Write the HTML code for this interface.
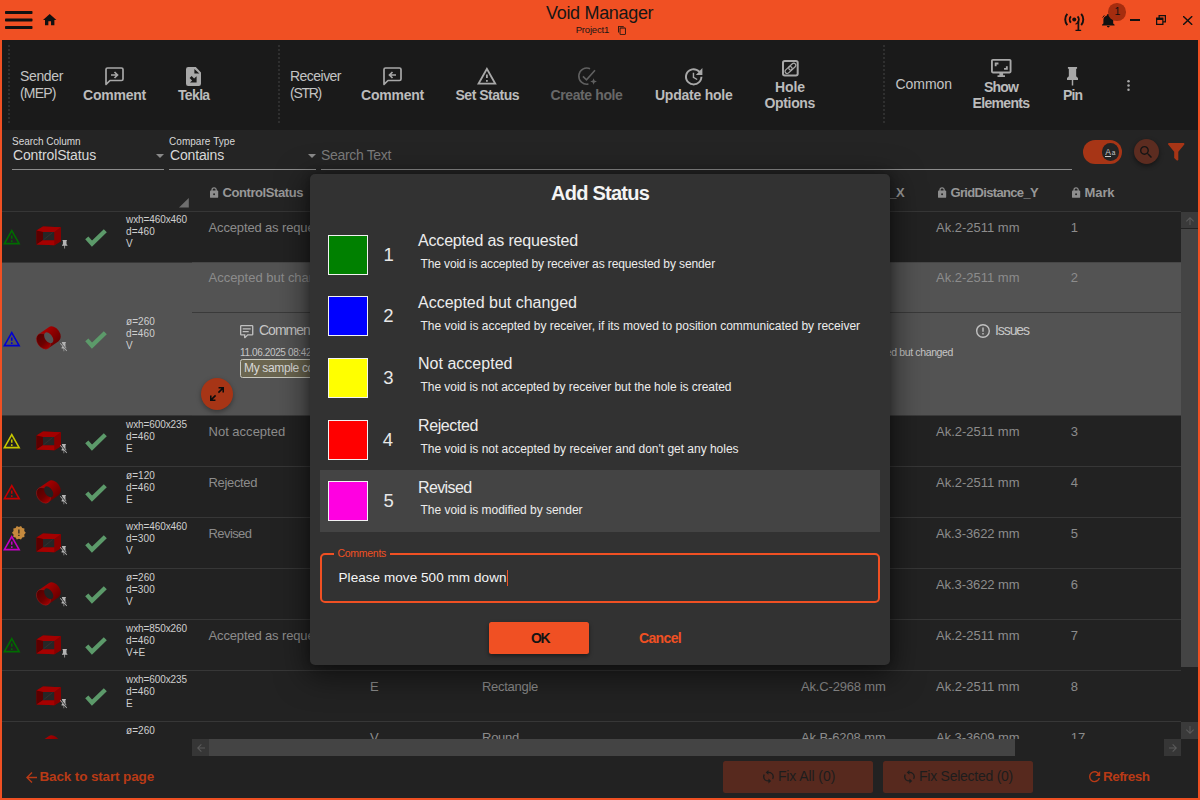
<!DOCTYPE html>
<html lang="en">
<head>
<meta charset="utf-8">
<title>Void Manager</title>
<style>
*{box-sizing:border-box;margin:0;padding:0}
html,body{width:1200px;height:800px;overflow:hidden;background:#f05023;font-family:"Liberation Sans",sans-serif}
#win{position:absolute;left:0;top:0;width:1200px;height:800px;background:#f05023;overflow:hidden}
.t{position:absolute;white-space:nowrap;line-height:1}
.ic{position:absolute;overflow:visible}
.r{position:absolute}
.vsep{position:absolute;top:45px;width:2px;height:80px;background-image:linear-gradient(#2f2f2f 50%,transparent 50%);background-size:2px 4px}
</style>
</head>
<body>
<div id="win">
<!-- title bar -->
<svg class="ic" style="left:5px;top:11px;" width="27.5" height="18" viewBox="0 0 27.5 18"><rect x="0" y="0" width="27.5" height="3" rx="0.8" fill="#111"/><rect x="0" y="7.6" width="27.5" height="3" rx="0.8" fill="#111"/><rect x="0" y="15" width="27.5" height="3" rx="0.8" fill="#111"/></svg>
<svg class="ic" style="left:43.2px;top:14px;" width="13.4" height="11.2" viewBox="2 3 20 17" preserveAspectRatio="none"><path d="M10,20V14H14V20H19V12H22L12,3L2,12H5V20H10Z" fill="#111" fill-rule="evenodd"/></svg>
<div class="t" style="left:546.00px;top:4px;font-size:18px;color:#161616;letter-spacing:-0.315px;">Void Manager</div>
<div class="t" style="left:575.70px;top:25px;font-size:9.5px;color:#161616;letter-spacing:-0.194px;">Project1</div>
<svg class="ic" style="left:618px;top:25.8px;" width="7.8" height="8.8" viewBox="2 1 19 22" preserveAspectRatio="none"><path d="M19,21H8V7H19M19,5H8A2,2 0 0,0 6,7V21A2,2 0 0,0 8,23H19A2,2 0 0,0 21,21V7A2,2 0 0,0 19,5M16,1H4A2,2 0 0,0 2,3V17H4V3H16V1Z" fill="#111" fill-rule="evenodd"/></svg>
<svg class="ic" style="left:1063.5px;top:13px;" width="20.5" height="18" viewBox="0 0 20.5 18"><g fill="none" stroke="#111" stroke-width="1.9"><path d="M3.3 0.9 A8.6 8.6 0 0 0 3.3 12.1"/><path d="M17.2 0.9 A8.6 8.6 0 0 1 17.2 12.1"/><path d="M6.9 3.4 A4.6 4.6 0 0 0 6.9 9.6"/><path d="M13.6 3.4 A4.6 4.6 0 0 1 13.6 9.6"/></g><circle cx="10.25" cy="6.5" r="2" fill="#111"/></svg>
<div class="t" style="left:1074.60px;top:21px;font-size:12px;color:#111;font-weight:bold;">1</div>
<svg class="ic" style="left:1102.3px;top:14.3px;" width="12.6" height="13.4" viewBox="3 2 18 21" preserveAspectRatio="none"><path d="M21,19V20H3V19L5,17V11C5,7.9 7.03,5.17 10,4.29C10,4.19 10,4.1 10,4A2,2 0 0,1 12,2A2,2 0 0,1 14,4C14,4.1 14,4.19 14,4.29C16.97,5.17 19,7.9 19,11V17L21,19M14,21A2,2 0 0,1 12,23A2,2 0 0,1 10,21" fill="#111" fill-rule="evenodd"/></svg>
<svg class="ic" style="left:1101.5px;top:14.5px;" width="3" height="3" viewBox="0 0 3 3"><path d="M2.4 0.3 L0.6 2.6" stroke="#111" stroke-width="0.9"/></svg>
<div class="r" style="left:1108.2px;top:3.2px;width:17.6px;height:17.6px;border-radius:50%;background:#a52d0f"></div>
<div class="t" style="left:1114.60px;top:6px;font-size:10.5px;color:#111;">1</div>
<div class="r" style="left:1130px;top:18.8px;width:10px;height:2.4px;background:#111;"></div>
<svg class="ic" style="left:1156px;top:15px;" width="10" height="10" viewBox="4 4 16 16" preserveAspectRatio="none"><path d="M4,8H8V4H20V16H16V20H4V8M16,8V14H18V6H10V8H16M6,12V18H14V12H6Z" fill="#111" fill-rule="evenodd"/></svg>
<svg class="ic" style="left:1182.6px;top:15.6px;" width="9.4" height="9" viewBox="5 5 14 14" preserveAspectRatio="none"><path d="M13.46,12L19,17.54V19H17.54L12,13.46L6.46,19H5V17.54L10.54,12L5,6.46V5H6.46L12,10.54L17.54,5H19V6.46L13.46,12Z" fill="#111" fill-rule="evenodd"/></svg>
<!-- toolbar -->
<div class="r" style="left:2px;top:40px;width:1196px;height:89.5px;background:#1a1a1a;"></div>
<div class="vsep" style="left:8px"></div>
<div class="vsep" style="left:278px"></div>
<div class="vsep" style="left:883px"></div>
<div class="t" style="left:20.00px;top:69px;font-size:14px;color:#c4c4c4;letter-spacing:-0.357px;">Sender</div>
<div class="t" style="left:20.00px;top:86px;font-size:14px;color:#c4c4c4;letter-spacing:-0.833px;">(MEP)</div>
<svg class="ic" style="left:105px;top:67px;" width="19" height="18.5" viewBox="0 0 19 18.5"><path d="M2.5 1 H16.5 A1.5 1.5 0 0 1 18 2.5 V12 A1.5 1.5 0 0 1 16.5 13.5 H5 L1 17.3 V2.5 A1.5 1.5 0 0 1 2.5 1 Z" fill="none" stroke="#a8a8a8" stroke-width="1.7" stroke-linejoin="round"/><path d="M6 8 H12 M9.5 5 L12.5 8 L9.5 11" fill="none" stroke="#a8a8a8" stroke-width="1.7"/></svg>
<div class="t" style="left:83.00px;top:88px;font-size:14px;color:#bcbcbc;font-weight:bold;letter-spacing:-0.223px;">Comment</div>
<svg class="ic" style="left:186.1px;top:67px;" width="15" height="19" viewBox="0 0 15 19"><path d="M2.2 0 H9.8 L15 5.4 V16.8 A2.2 2.2 0 0 1 12.8 19 H2.2 A2.2 2.2 0 0 1 0 16.8 V2.2 A2.2 2.2 0 0 1 2.2 0 Z" fill="#a8a8a8"/><path d="M8.4 2 V6.6 H13.3 Z" fill="#1a1a1a"/><path d="M10.6 9.2 V15.6 H4 L6.1 13.5 L3.6 11 L5.6 9 L8.1 11.5 Z" fill="#1a1a1a"/></svg>
<div class="t" style="left:178.00px;top:88px;font-size:14px;color:#bcbcbc;font-weight:bold;letter-spacing:-0.652px;">Tekla</div>
<div class="t" style="left:290.00px;top:69px;font-size:14px;color:#c4c4c4;letter-spacing:-0.530px;">Receiver</div>
<div class="t" style="left:290.00px;top:86px;font-size:14px;color:#c4c4c4;letter-spacing:-1.265px;">(STR)</div>
<svg class="ic" style="left:383px;top:67px;" width="19" height="18.5" viewBox="0 0 19 18.5"><path d="M2.5 1 H16.5 A1.5 1.5 0 0 1 18 2.5 V12 A1.5 1.5 0 0 1 16.5 13.5 H5 L1 17.3 V2.5 A1.5 1.5 0 0 1 2.5 1 Z" fill="none" stroke="#a8a8a8" stroke-width="1.7" stroke-linejoin="round"/><path d="M13 8 H7 M9.5 5 L6.5 8 L9.5 11" fill="none" stroke="#a8a8a8" stroke-width="1.7"/></svg>
<div class="t" style="left:361.00px;top:88px;font-size:14px;color:#bcbcbc;font-weight:bold;letter-spacing:-0.223px;">Comment</div>
<svg class="ic" style="left:477.4px;top:67.2px;" width="19.8" height="17.6" viewBox="1 2 22 19" preserveAspectRatio="none"><path d="M12,2L1,21H23M12,6L19.53,19H4.47M11,10V14H13V10M11,16V18H13V16" fill="#a8a8a8" fill-rule="evenodd"/></svg>
<div class="t" style="left:455.50px;top:88px;font-size:14px;color:#bcbcbc;font-weight:bold;letter-spacing:-0.496px;">Set Status</div>
<svg class="ic" style="left:577.5px;top:67.3px;" width="19" height="18.5" viewBox="0 0 19 18.5"><path d="M12.06 1.64 A8.1 8.1 0 1 0 10.45 17.05" fill="none" stroke="#606060" stroke-width="1.6"/><path d="M4.9 9.4 L8.5 12.9 L17 3.3" fill="none" stroke="#606060" stroke-width="1.6"/><path d="M15.6 11.2 L16.5 13.6 L18.9 14.5 L16.5 15.4 L15.6 17.8 L14.7 15.4 L12.3 14.5 L14.7 13.6 Z" fill="#606060"/></svg>
<div class="t" style="left:550.50px;top:88px;font-size:14px;color:#686868;font-weight:bold;letter-spacing:-0.386px;">Create hole</div>
<svg class="ic" style="left:685.3px;top:67.8px;" width="17.4" height="17.4" viewBox="3 3 18 18" preserveAspectRatio="none"><path d="M21,10.12H14.22L16.96,7.3C14.23,4.6 9.81,4.5 7.08,7.2C4.35,9.91 4.35,14.28 7.08,17C9.81,19.7 14.23,19.7 16.96,17C18.32,15.65 19,14.08 19,12.1H21C21,14.08 20.12,16.65 18.36,18.39C14.85,21.87 9.15,21.87 5.64,18.39C2.14,14.92 2.11,9.28 5.62,5.81C9.13,2.34 14.76,2.34 18.27,5.81L21,3V10.12M12.5,8V12.25L16,14.33L15.28,15.54L11,13V8H12.5Z" fill="#a8a8a8" fill-rule="evenodd"/></svg>
<div class="t" style="left:655.00px;top:88px;font-size:14px;color:#bcbcbc;font-weight:bold;letter-spacing:-0.238px;">Update hole</div>
<svg class="ic" style="left:781.5px;top:59.7px;" width="16.7" height="16.5" viewBox="0 0 16.7 16.5"><rect x="1" y="1" width="14.7" height="14.5" rx="1.8" fill="none" stroke="#a8a8a8" stroke-width="2"/><g transform="translate(8.45 8.3) rotate(-43)" fill="none" stroke="#a8a8a8" stroke-width="1.25"><rect x="-6.6" y="-2.1" width="8.2" height="4.2" rx="2.1"/><rect x="-1.6" y="-2.1" width="8.2" height="4.2" rx="2.1"/></g></svg>
<div class="t" style="left:775.00px;top:80px;font-size:14px;color:#bcbcbc;font-weight:bold;letter-spacing:-0.085px;">Hole</div>
<div class="t" style="left:764.50px;top:96px;font-size:14px;color:#bcbcbc;font-weight:bold;letter-spacing:-0.340px;">Options</div>
<div class="t" style="left:895.50px;top:77px;font-size:14px;color:#c4c4c4;letter-spacing:-0.049px;">Common</div>
<svg class="ic" style="left:990.5px;top:59px;" width="20.5" height="18" viewBox="1 2 22 20" preserveAspectRatio="none"><path d="M9,6H5V10H7V8H9M19,10H17V12H15V14H19M21,16H3V4H21M21,2H3C1.89,2 1,2.89 1,4V16A2,2 0 0,0 3,18H10V20H8V22H16V20H14V18H21A2,2 0 0,0 23,16V4C23,2.89 22.1,2 21,2" fill="#a8a8a8" fill-rule="evenodd"/></svg>
<div class="t" style="left:984.00px;top:80px;font-size:14px;color:#bcbcbc;font-weight:bold;letter-spacing:-0.833px;">Show</div>
<div class="t" style="left:972.50px;top:96px;font-size:14px;color:#bcbcbc;font-weight:bold;letter-spacing:-0.656px;">Elements</div>
<svg class="ic" style="left:1067px;top:67px;" width="11" height="18.5" viewBox="6 2 12 20" preserveAspectRatio="none"><path d="M16,12V4H17V2H7V4H8V12L6,14V16H11.2V22H12.8V16H18V14L16,12Z" fill="#a8a8a8" fill-rule="evenodd"/></svg>
<div class="t" style="left:1063.00px;top:88px;font-size:14px;color:#bcbcbc;font-weight:bold;letter-spacing:-0.926px;">Pin</div>
<svg class="ic" style="left:1127.3px;top:79.7px;" width="3" height="11" viewBox="0 0 3 11"><circle cx="1.5" cy="1.3" r="1.25" fill="#a8a8a8"/><circle cx="1.5" cy="5.5" r="1.25" fill="#a8a8a8"/><circle cx="1.5" cy="9.7" r="1.25" fill="#a8a8a8"/></svg>
<!-- search -->
<div class="r" style="left:2px;top:129.5px;width:1196px;height:668.5px;background:#242424;"></div>
<div class="t" style="left:12.00px;top:137px;font-size:10px;color:#d8d8d8;letter-spacing:-0.032px;">Search Column</div>
<div class="t" style="left:13.00px;top:148px;font-size:14px;color:#d8d8d8;letter-spacing:-0.140px;">ControlStatus</div>
<svg class="ic" style="left:156px;top:154px;" width="8" height="4" viewBox="0 0 8 4"><path d="M0 0 H8 L4 4 Z" fill="#8a8a8a"/></svg>
<div class="r" style="left:12px;top:168.6px;width:152px;height:1px;background:#8c8c8c;"></div>
<div class="t" style="left:169.00px;top:137px;font-size:10px;color:#d8d8d8;letter-spacing:0.050px;">Compare Type</div>
<div class="t" style="left:170.00px;top:148px;font-size:14px;color:#d8d8d8;letter-spacing:-0.157px;">Contains</div>
<svg class="ic" style="left:308px;top:154px;" width="8" height="4" viewBox="0 0 8 4"><path d="M0 0 H8 L4 4 Z" fill="#8a8a8a"/></svg>
<div class="r" style="left:169px;top:168.6px;width:147px;height:1px;background:#8c8c8c;"></div>
<div class="t" style="left:321.00px;top:148px;font-size:14px;color:#7c7c7c;letter-spacing:-0.334px;">Search Text</div>
<div class="r" style="left:321px;top:168.6px;width:751px;height:1px;background:#8c8c8c;"></div>
<div class="r" style="left:1083.2px;top:139.8px;width:39px;height:24px;border-radius:12px;background:#a73516"></div>
<div class="r" style="left:1101.5px;top:143px;width:17.5px;height:17.5px;border-radius:50%;background:#232323"></div>
<div class="t" style="left:1105.30px;top:148px;font-size:8.5px;color:#c8c8c8;">A</div>
<div class="t" style="left:1111.80px;top:150px;font-size:6.5px;color:#c8c8c8;">a</div>
<div class="r" style="left:1105.3px;top:155.6px;width:5.6px;height:1px;background:#c8c8c8;"></div>
<div class="r" style="left:1133.5px;top:138.5px;width:25px;height:25px;border-radius:50%;background:#5c2c20;box-shadow:0 2px 5px rgba(0,0,0,.45)"></div>
<svg class="ic" style="left:1140.3px;top:145.6px;" width="12" height="12" viewBox="3 3 17.5 17.5" preserveAspectRatio="none"><path d="M9.5,3A6.5,6.5 0 0,1 16,9.5C16,11.11 15.41,12.59 14.44,13.73L14.71,14H15.5L20.5,19L19,20.5L14,15.5V14.71L13.73,14.44C12.59,15.41 11.11,16 9.5,16A6.5,6.5 0 0,1 3,9.5A6.5,6.5 0 0,1 9.5,3M9.5,5C7,5 5,7 5,9.5C5,12 7,14 9.5,14C12,14 14,12 14,9.5C14,7 12,5 9.5,5Z" fill="#151515" fill-rule="evenodd"/></svg>
<svg class="ic" style="left:1168px;top:143px;" width="16.5" height="17.6" viewBox="4 3 16 18" preserveAspectRatio="none"><path d="M14,12V19.88C14.04,20.18 13.94,20.5 13.71,20.71C13.32,21.1 12.69,21.1 12.3,20.71L10.29,18.7C10.06,18.47 9.96,18.16 10,17.87V12H9.97L4.21,4.62C3.87,4.19 3.95,3.56 4.38,3.22C4.57,3.08 4.78,3 5,3V3H19V3C19.22,3 19.43,3.08 19.62,3.22C20.05,3.56 20.13,4.19 19.79,4.62L14.03,12H14Z" fill="#a73516" fill-rule="evenodd"/></svg>
<!-- grid header -->
<svg class="ic" style="left:209.8px;top:187.2px;" width="8.2" height="10.8" viewBox="0 0 8.2 10.8"><rect x="0" y="3.5" width="8.2" height="7.3" rx="0.9" fill="#8e8e8e"/><path d="M2 4 V2.9 A2.1 2.1 0 0 1 6.2 2.9 V4" fill="none" stroke="#8e8e8e" stroke-width="1.25"/><circle cx="4.1" cy="7.3" r="0.95" fill="#242424"/></svg>
<div class="t" style="left:222.50px;top:186px;font-size:13px;color:#989898;font-weight:bold;letter-spacing:-0.419px;">ControlStatus</div>
<svg class="ic" style="left:179.2px;top:198.4px;" width="9.8" height="9.4" viewBox="0 0 9.8 9.4"><path d="M9.8 0 V9.4 H0 Z" fill="#6e6e6e"/></svg>
<div class="t" style="left:815.50px;top:186px;font-size:13px;color:#989898;font-weight:bold;letter-spacing:-0.594px;">GridDistance_X</div>
<svg class="ic" style="left:937.8px;top:187.2px;" width="8.2" height="10.8" viewBox="0 0 8.2 10.8"><rect x="0" y="3.5" width="8.2" height="7.3" rx="0.9" fill="#8e8e8e"/><path d="M2 4 V2.9 A2.1 2.1 0 0 1 6.2 2.9 V4" fill="none" stroke="#8e8e8e" stroke-width="1.25"/><circle cx="4.1" cy="7.3" r="0.95" fill="#242424"/></svg>
<div class="t" style="left:950.50px;top:186px;font-size:13px;color:#989898;font-weight:bold;letter-spacing:-0.665px;">GridDistance_Y</div>
<svg class="ic" style="left:1072.3px;top:187.2px;" width="8.2" height="10.8" viewBox="0 0 8.2 10.8"><rect x="0" y="3.5" width="8.2" height="7.3" rx="0.9" fill="#8e8e8e"/><path d="M2 4 V2.9 A2.1 2.1 0 0 1 6.2 2.9 V4" fill="none" stroke="#8e8e8e" stroke-width="1.25"/><circle cx="4.1" cy="7.3" r="0.95" fill="#242424"/></svg>
<div class="t" style="left:1084.50px;top:186px;font-size:13px;color:#989898;font-weight:bold;letter-spacing:-0.087px;">Mark</div>
<div class="r" style="left:2px;top:211px;width:1179px;height:1px;background:#363636;"></div>
<!-- rows -->
<div class="r" id="rows" style="left:2px;top:212px;width:1179px;height:527px;overflow:hidden">
<div class="r" style="left:0px;top:0px;width:1179px;height:50px;background:#222222;"></div>
<svg class="ic" style="left:1.3px;top:16.6px;" width="17.5" height="15.4" viewBox="1 2 22 19" preserveAspectRatio="none"><path d="M12,2L1,21H23M12,6L19.53,19H4.47M11,10V14H13V10M11,16V18H13V16" fill="#006c00" fill-rule="evenodd"/></svg>
<svg class="ic" style="left:34px;top:14px;" width="25.5" height="20" viewBox="0 0 25.5 20"><path d="M0.5 4.5 L7 0.5 L24.8 1.2 V15.3 L18.5 19.3 L0.5 18.5 Z" fill="#8a0000"/><path d="M0.5 4.5 L7 0.5 L24.8 1.2 L18.5 6 H7 Z" fill="#a40000"/><path d="M0.5 4.5 L7 6 V14.2 L0.5 18.5 Z" fill="#5a0000"/><path d="M0.5 18.5 L7 14.2 H18.5 V19.3 Z" fill="#a60000"/><path d="M7 6 H18.5 V14.2 H7 Z" fill="#262626"/><path d="M7.5 13.8 L16.5 6.6" stroke="#3c3c3c" stroke-width="0.5"/><path d="M18.5 6 L24.8 1.2 V15.3 L18.5 19.3 Z" fill="#870000"/></svg>
<svg class="ic" style="left:59.8px;top:27.8px;" width="5.4" height="8.4" viewBox="6 2 12 20" preserveAspectRatio="none"><path d="M16,12V4H17V2H7V4H8V12L6,14V16H11.2V22H12.8V16H18V14L16,12Z" fill="#b4b4b4" fill-rule="evenodd"/></svg>
<svg class="ic" style="left:83.3px;top:16.6px;" width="22" height="18" viewBox="0 0 22 18"><path d="M1.8 8.9 L7 14.6 L20.3 1.7" fill="none" stroke="#5c9a6a" stroke-width="4.3" stroke-linejoin="miter"/></svg>
<div class="t" style="left:124.00px;top:3px;font-size:10px;color:#cfcfcf;letter-spacing:-0.090px;">wxh=460x460</div>
<div class="t" style="left:124.00px;top:15px;font-size:10px;color:#cfcfcf;letter-spacing:0.183px;">d=460</div>
<div class="t" style="left:124.00px;top:27px;font-size:10px;color:#cfcfcf;">V</div>
<div class="t" style="left:206.50px;top:9px;font-size:13px;color:#8c8c8c;letter-spacing:-0.142px;">Accepted as requested</div>
<div class="t" style="left:934.00px;top:9px;font-size:13px;color:#8c8c8c;letter-spacing:-0.006px;">Ak.2-2511 mm</div>
<div class="t" style="left:1068.70px;top:9px;font-size:13px;color:#8c8c8c;">1</div>
<div class="r" style="left:0px;top:50px;width:1179px;height:1px;background:#373737;"></div>
<div class="r" style="left:190px;top:50px;width:989px;height:1px;background:#474747;"></div>
<div class="r" style="left:0px;top:51px;width:1179px;height:152px;background:#535353;"></div>
<svg class="ic" style="left:1.3px;top:118.6px;" width="17.5" height="15.4" viewBox="1 2 22 19" preserveAspectRatio="none"><path d="M12,2L1,21H23M12,6L19.53,19H4.47M11,10V14H13V10M11,16V18H13V16" fill="#0000d2" fill-rule="evenodd"/></svg>
<svg class="ic" style="left:34px;top:114.2px;" width="25" height="23.5" viewBox="0 0 25 23.5"><defs><linearGradient id="ca1" gradientUnits="userSpaceOnUse" x1="6" y1="-9" x2="10" y2="9"><stop offset="0" stop-color="#ad0000"/><stop offset="1" stop-color="#6a0000"/></linearGradient><linearGradient id="cb1" gradientUnits="userSpaceOnUse" x1="0" y1="-8" x2="2" y2="9"><stop offset="0" stop-color="#560000"/><stop offset="0.55" stop-color="#6c0000"/><stop offset="1" stop-color="#a80000"/></linearGradient></defs><g transform="translate(7.5 15.3) rotate(-35)"><path d="M0 -8.6 H12.4 A6.2 8.6 0 0 1 12.4 8.6 H0 A6.2 8.6 0 0 1 0 -8.6 Z" fill="url(#ca1)"/><ellipse cx="0" cy="0" rx="6.2" ry="8.6" fill="url(#cb1)" stroke="#a03030" stroke-width="0.3"/><ellipse cx="6.3" cy="0.1" rx="3.7" ry="6.1" fill="#535353"/></g></svg>
<svg class="ic" style="left:58px;top:129.6px;" width="7" height="9.2" viewBox="2 2 18 20" preserveAspectRatio="none"><path d="M2,5.27L3.28,4L20,20.72L18.73,22L12.8,16.07V22H11.2V16H6V14L8,12V11.27L2,5.27M16,12L18,14V16H17.82L8,6.18V4H7V2H17V4H16V12Z" fill="#b4b4b4" fill-rule="evenodd"/></svg>
<svg class="ic" style="left:83.3px;top:118.6px;" width="22" height="18" viewBox="0 0 22 18"><path d="M1.8 8.9 L7 14.6 L20.3 1.7" fill="none" stroke="#5c9a6a" stroke-width="4.3" stroke-linejoin="miter"/></svg>
<div class="t" style="left:124.00px;top:105px;font-size:10px;color:#cfcfcf;letter-spacing:0.073px;">ø=260</div>
<div class="t" style="left:124.00px;top:117px;font-size:10px;color:#cfcfcf;letter-spacing:0.183px;">d=460</div>
<div class="t" style="left:124.00px;top:129px;font-size:10px;color:#cfcfcf;">V</div>
<div class="t" style="left:206.50px;top:59px;font-size:13px;color:#8c8c8c;letter-spacing:-0.009px;">Accepted but changed</div>
<div class="t" style="left:934.00px;top:59px;font-size:13px;color:#8c8c8c;letter-spacing:-0.006px;">Ak.2-2511 mm</div>
<div class="t" style="left:1068.70px;top:59px;font-size:13px;color:#8c8c8c;">2</div>
<div class="r" style="left:190px;top:203px;width:989px;height:1px;background:#3a3a3a;"></div>
<div class="r" style="left:0px;top:203px;width:190px;height:1px;background:#373737;"></div>
<div class="r" style="left:190px;top:100px;width:989px;height:1px;background:#3a3a3a;"></div>
<svg class="ic" style="left:238px;top:112.5px;" width="13.4" height="13.2" viewBox="2 2 20 20" preserveAspectRatio="none"><path d="M9,22A1,1 0 0,1 8,21V18H4A2,2 0 0,1 2,16V4C2,2.89 2.9,2 4,2H20A2,2 0 0,1 22,4V16A2,2 0 0,1 20,18H13.9L10.2,21.71C10,21.9 9.75,22 9.5,22V22H9M10,16V19.08L13.08,16H20V4H4V16H10M6,7H18V9H6V7M6,11H15V13H6V11Z" fill="#c0c0c0" fill-rule="evenodd"/></svg>
<div class="t" style="left:257.00px;top:111px;font-size:14px;color:#c6c6c6;letter-spacing:-1.010px;">Comments</div>
<div class="t" style="left:238.00px;top:136px;font-size:10px;color:#c6c6c6;letter-spacing:-0.376px;">11.06.2025 08:42</div>
<div class="r" style="left:237.5px;top:147.3px;width:150px;height:19px;border:1px solid #c8c8c0;border-radius:2.5px;background:#6b6650"></div>
<div class="t" style="left:242.00px;top:150px;font-size:12px;color:#d8d8d8;letter-spacing:-0.341px;">My sample comment</div>
<svg class="ic" style="left:974px;top:112.4px;" width="14" height="14" viewBox="2 2 20 20" preserveAspectRatio="none"><path d="M11,15H13V17H11V15M11,7H13V13H11V7M12,2C6.47,2 2,6.5 2,12A10,10 0 0,0 12,22A10,10 0 0,0 22,12A10,10 0 0,0 12,2M12,20A8,8 0 0,1 4,12A8,8 0 0,1 12,4A8,8 0 0,1 20,12A8,8 0 0,1 12,20Z" fill="#c0c0c0" fill-rule="evenodd"/></svg>
<div class="t" style="left:993.00px;top:111px;font-size:14px;color:#c6c6c6;letter-spacing:-1.077px;">Issues</div>
<div class="t" style="left:854.00px;top:135px;font-size:10.5px;color:#c6c6c6;letter-spacing:-0.375px;">Accepted but changed</div>
<div class="r" style="left:199.3px;top:166px;width:32px;height:32px;border-radius:50%;background:#a73516;box-shadow:0 2px 5px rgba(0,0,0,.35)"></div>
<svg class="ic" style="left:208.3px;top:175px;" width="14" height="14" viewBox="3 3 18 18" preserveAspectRatio="none"><path d="M10,21V19H6.41L10.91,14.5L9.5,13.09L5,17.59V14H3V21H10M14.5,10.91L19,6.41V10H21V3H14V5H17.59L13.09,9.5L14.5,10.91Z" fill="#0c0c0c" fill-rule="evenodd"/></svg>
<div class="r" style="left:0px;top:204px;width:1179px;height:50px;background:#222222;"></div>
<svg class="ic" style="left:1.3px;top:221.4px;" width="17.5" height="15.4" viewBox="1 2 22 19" preserveAspectRatio="none"><path d="M12,2L1,21H23M12,6L19.53,19H4.47M11,10V14H13V10M11,16V18H13V16" fill="#c6c600" fill-rule="evenodd"/></svg>
<svg class="ic" style="left:34px;top:218.8px;" width="25.5" height="20" viewBox="0 0 25.5 20"><path d="M0.5 4.5 L7 0.5 L24.8 1.2 V15.3 L18.5 19.3 L0.5 18.5 Z" fill="#8a0000"/><path d="M0.5 4.5 L7 0.5 L24.8 1.2 L18.5 6 H7 Z" fill="#a40000"/><path d="M0.5 4.5 L7 6 V14.2 L0.5 18.5 Z" fill="#5a0000"/><path d="M0.5 18.5 L7 14.2 H18.5 V19.3 Z" fill="#a60000"/><path d="M7 6 H18.5 V14.2 H7 Z" fill="#262626"/><path d="M7.5 13.8 L16.5 6.6" stroke="#3c3c3c" stroke-width="0.5"/><path d="M18.5 6 L24.8 1.2 V15.3 L18.5 19.3 Z" fill="#870000"/></svg>
<svg class="ic" style="left:58px;top:232.4px;" width="7" height="9.2" viewBox="2 2 18 20" preserveAspectRatio="none"><path d="M2,5.27L3.28,4L20,20.72L18.73,22L12.8,16.07V22H11.2V16H6V14L8,12V11.27L2,5.27M16,12L18,14V16H17.82L8,6.18V4H7V2H17V4H16V12Z" fill="#b4b4b4" fill-rule="evenodd"/></svg>
<svg class="ic" style="left:83.3px;top:221.4px;" width="22" height="18" viewBox="0 0 22 18"><path d="M1.8 8.9 L7 14.6 L20.3 1.7" fill="none" stroke="#5c9a6a" stroke-width="4.3" stroke-linejoin="miter"/></svg>
<div class="t" style="left:124.00px;top:208px;font-size:10px;color:#cfcfcf;letter-spacing:-0.090px;">wxh=600x235</div>
<div class="t" style="left:124.00px;top:220px;font-size:10px;color:#cfcfcf;letter-spacing:0.183px;">d=460</div>
<div class="t" style="left:124.00px;top:232px;font-size:10px;color:#cfcfcf;">E</div>
<div class="t" style="left:206.50px;top:213px;font-size:13px;color:#8c8c8c;letter-spacing:0.008px;">Not accepted</div>
<div class="t" style="left:934.00px;top:213px;font-size:13px;color:#8c8c8c;letter-spacing:-0.006px;">Ak.2-2511 mm</div>
<div class="t" style="left:1068.70px;top:213px;font-size:13px;color:#8c8c8c;">3</div>
<div class="r" style="left:0px;top:254px;width:1179px;height:1px;background:#373737;"></div>
<div class="r" style="left:0px;top:255px;width:1179px;height:50px;background:#222222;"></div>
<svg class="ic" style="left:1.3px;top:272.4px;" width="17.5" height="15.4" viewBox="1 2 22 19" preserveAspectRatio="none"><path d="M12,2L1,21H23M12,6L19.53,19H4.47M11,10V14H13V10M11,16V18H13V16" fill="#c40000" fill-rule="evenodd"/></svg>
<svg class="ic" style="left:34px;top:268px;" width="25" height="23.5" viewBox="0 0 25 23.5"><defs><linearGradient id="ca2" gradientUnits="userSpaceOnUse" x1="6" y1="-9" x2="10" y2="9"><stop offset="0" stop-color="#ad0000"/><stop offset="1" stop-color="#6a0000"/></linearGradient><linearGradient id="cb2" gradientUnits="userSpaceOnUse" x1="0" y1="-8" x2="2" y2="9"><stop offset="0" stop-color="#560000"/><stop offset="0.55" stop-color="#6c0000"/><stop offset="1" stop-color="#a80000"/></linearGradient></defs><g transform="translate(7.5 15.3) rotate(-35)"><path d="M0 -8.6 H12.4 A6.2 8.6 0 0 1 12.4 8.6 H0 A6.2 8.6 0 0 1 0 -8.6 Z" fill="url(#ca2)"/><ellipse cx="0" cy="0" rx="6.2" ry="8.6" fill="url(#cb2)" stroke="#a03030" stroke-width="0.3"/><ellipse cx="6.3" cy="0.1" rx="3.7" ry="6.1" fill="#222222"/></g></svg>
<svg class="ic" style="left:58px;top:283.4px;" width="7" height="9.2" viewBox="2 2 18 20" preserveAspectRatio="none"><path d="M2,5.27L3.28,4L20,20.72L18.73,22L12.8,16.07V22H11.2V16H6V14L8,12V11.27L2,5.27M16,12L18,14V16H17.82L8,6.18V4H7V2H17V4H16V12Z" fill="#b4b4b4" fill-rule="evenodd"/></svg>
<svg class="ic" style="left:83.3px;top:272.4px;" width="22" height="18" viewBox="0 0 22 18"><path d="M1.8 8.9 L7 14.6 L20.3 1.7" fill="none" stroke="#5c9a6a" stroke-width="4.3" stroke-linejoin="miter"/></svg>
<div class="t" style="left:124.00px;top:259px;font-size:10px;color:#cfcfcf;letter-spacing:0.073px;">ø=120</div>
<div class="t" style="left:124.00px;top:271px;font-size:10px;color:#cfcfcf;letter-spacing:0.183px;">d=460</div>
<div class="t" style="left:124.00px;top:283px;font-size:10px;color:#cfcfcf;">E</div>
<div class="t" style="left:206.50px;top:264px;font-size:13px;color:#8c8c8c;letter-spacing:-0.339px;">Rejected</div>
<div class="t" style="left:934.00px;top:264px;font-size:13px;color:#8c8c8c;letter-spacing:-0.006px;">Ak.2-2511 mm</div>
<div class="t" style="left:1068.70px;top:264px;font-size:13px;color:#8c8c8c;">4</div>
<div class="r" style="left:0px;top:305px;width:1179px;height:1px;background:#373737;"></div>
<div class="r" style="left:0px;top:306px;width:1179px;height:50px;background:#222222;"></div>
<svg class="ic" style="left:1.3px;top:323.4px;" width="17.5" height="15.4" viewBox="1 2 22 19" preserveAspectRatio="none"><path d="M12,2L1,21H23M12,6L19.53,19H4.47M11,10V14H13V10M11,16V18H13V16" fill="#c400c4" fill-rule="evenodd"/></svg>
<svg class="ic" style="left:34px;top:320.8px;" width="25.5" height="20" viewBox="0 0 25.5 20"><path d="M0.5 4.5 L7 0.5 L24.8 1.2 V15.3 L18.5 19.3 L0.5 18.5 Z" fill="#8a0000"/><path d="M0.5 4.5 L7 0.5 L24.8 1.2 L18.5 6 H7 Z" fill="#a40000"/><path d="M0.5 4.5 L7 6 V14.2 L0.5 18.5 Z" fill="#5a0000"/><path d="M0.5 18.5 L7 14.2 H18.5 V19.3 Z" fill="#a60000"/><path d="M7 6 H18.5 V14.2 H7 Z" fill="#262626"/><path d="M7.5 13.8 L16.5 6.6" stroke="#3c3c3c" stroke-width="0.5"/><path d="M18.5 6 L24.8 1.2 V15.3 L18.5 19.3 Z" fill="#870000"/></svg>
<svg class="ic" style="left:58px;top:334.4px;" width="7" height="9.2" viewBox="2 2 18 20" preserveAspectRatio="none"><path d="M2,5.27L3.28,4L20,20.72L18.73,22L12.8,16.07V22H11.2V16H6V14L8,12V11.27L2,5.27M16,12L18,14V16H17.82L8,6.18V4H7V2H17V4H16V12Z" fill="#b4b4b4" fill-rule="evenodd"/></svg>
<svg class="ic" style="left:83.3px;top:323.4px;" width="22" height="18" viewBox="0 0 22 18"><path d="M1.8 8.9 L7 14.6 L20.3 1.7" fill="none" stroke="#5c9a6a" stroke-width="4.3" stroke-linejoin="miter"/></svg>
<div class="t" style="left:124.00px;top:310px;font-size:10px;color:#cfcfcf;letter-spacing:-0.090px;">wxh=460x460</div>
<div class="t" style="left:124.00px;top:322px;font-size:10px;color:#cfcfcf;letter-spacing:0.183px;">d=300</div>
<div class="t" style="left:124.00px;top:334px;font-size:10px;color:#cfcfcf;">V</div>
<div class="t" style="left:206.50px;top:315px;font-size:13px;color:#8c8c8c;letter-spacing:-0.581px;">Revised</div>
<div class="t" style="left:934.00px;top:315px;font-size:13px;color:#8c8c8c;letter-spacing:-0.086px;">Ak.3-3622 mm</div>
<div class="t" style="left:1068.70px;top:315px;font-size:13px;color:#8c8c8c;">5</div>
<div class="r" style="left:0px;top:356px;width:1179px;height:1px;background:#373737;"></div>
<div class="r" style="left:0px;top:357px;width:1179px;height:50px;background:#222222;"></div>
<svg class="ic" style="left:34px;top:370px;" width="25" height="23.5" viewBox="0 0 25 23.5"><defs><linearGradient id="ca3" gradientUnits="userSpaceOnUse" x1="6" y1="-9" x2="10" y2="9"><stop offset="0" stop-color="#ad0000"/><stop offset="1" stop-color="#6a0000"/></linearGradient><linearGradient id="cb3" gradientUnits="userSpaceOnUse" x1="0" y1="-8" x2="2" y2="9"><stop offset="0" stop-color="#560000"/><stop offset="0.55" stop-color="#6c0000"/><stop offset="1" stop-color="#a80000"/></linearGradient></defs><g transform="translate(7.5 15.3) rotate(-35)"><path d="M0 -8.6 H12.4 A6.2 8.6 0 0 1 12.4 8.6 H0 A6.2 8.6 0 0 1 0 -8.6 Z" fill="url(#ca3)"/><ellipse cx="0" cy="0" rx="6.2" ry="8.6" fill="url(#cb3)" stroke="#a03030" stroke-width="0.3"/><ellipse cx="6.3" cy="0.1" rx="3.7" ry="6.1" fill="#222222"/></g></svg>
<svg class="ic" style="left:58px;top:385.4px;" width="7" height="9.2" viewBox="2 2 18 20" preserveAspectRatio="none"><path d="M2,5.27L3.28,4L20,20.72L18.73,22L12.8,16.07V22H11.2V16H6V14L8,12V11.27L2,5.27M16,12L18,14V16H17.82L8,6.18V4H7V2H17V4H16V12Z" fill="#b4b4b4" fill-rule="evenodd"/></svg>
<svg class="ic" style="left:83.3px;top:374.4px;" width="22" height="18" viewBox="0 0 22 18"><path d="M1.8 8.9 L7 14.6 L20.3 1.7" fill="none" stroke="#5c9a6a" stroke-width="4.3" stroke-linejoin="miter"/></svg>
<div class="t" style="left:124.00px;top:361px;font-size:10px;color:#cfcfcf;letter-spacing:0.073px;">ø=260</div>
<div class="t" style="left:124.00px;top:373px;font-size:10px;color:#cfcfcf;letter-spacing:0.183px;">d=300</div>
<div class="t" style="left:124.00px;top:385px;font-size:10px;color:#cfcfcf;">V</div>
<div class="t" style="left:934.00px;top:366px;font-size:13px;color:#8c8c8c;letter-spacing:-0.086px;">Ak.3-3622 mm</div>
<div class="t" style="left:1068.70px;top:366px;font-size:13px;color:#8c8c8c;">6</div>
<div class="r" style="left:0px;top:407px;width:1179px;height:1px;background:#373737;"></div>
<div class="r" style="left:0px;top:408px;width:1179px;height:50px;background:#222222;"></div>
<svg class="ic" style="left:1.3px;top:425.4px;" width="17.5" height="15.4" viewBox="1 2 22 19" preserveAspectRatio="none"><path d="M12,2L1,21H23M12,6L19.53,19H4.47M11,10V14H13V10M11,16V18H13V16" fill="#006c00" fill-rule="evenodd"/></svg>
<svg class="ic" style="left:34px;top:422.8px;" width="25.5" height="20" viewBox="0 0 25.5 20"><path d="M0.5 4.5 L7 0.5 L24.8 1.2 V15.3 L18.5 19.3 L0.5 18.5 Z" fill="#8a0000"/><path d="M0.5 4.5 L7 0.5 L24.8 1.2 L18.5 6 H7 Z" fill="#a40000"/><path d="M0.5 4.5 L7 6 V14.2 L0.5 18.5 Z" fill="#5a0000"/><path d="M0.5 18.5 L7 14.2 H18.5 V19.3 Z" fill="#a60000"/><path d="M7 6 H18.5 V14.2 H7 Z" fill="#262626"/><path d="M7.5 13.8 L16.5 6.6" stroke="#3c3c3c" stroke-width="0.5"/><path d="M18.5 6 L24.8 1.2 V15.3 L18.5 19.3 Z" fill="#870000"/></svg>
<svg class="ic" style="left:59.8px;top:436.6px;" width="5.4" height="8.4" viewBox="6 2 12 20" preserveAspectRatio="none"><path d="M16,12V4H17V2H7V4H8V12L6,14V16H11.2V22H12.8V16H18V14L16,12Z" fill="#b4b4b4" fill-rule="evenodd"/></svg>
<svg class="ic" style="left:83.3px;top:425.4px;" width="22" height="18" viewBox="0 0 22 18"><path d="M1.8 8.9 L7 14.6 L20.3 1.7" fill="none" stroke="#5c9a6a" stroke-width="4.3" stroke-linejoin="miter"/></svg>
<div class="t" style="left:124.00px;top:412px;font-size:10px;color:#cfcfcf;letter-spacing:-0.090px;">wxh=850x260</div>
<div class="t" style="left:124.00px;top:424px;font-size:10px;color:#cfcfcf;letter-spacing:0.183px;">d=460</div>
<div class="t" style="left:124.00px;top:436px;font-size:10px;color:#cfcfcf;">V+E</div>
<div class="t" style="left:206.50px;top:417px;font-size:13px;color:#8c8c8c;letter-spacing:-0.142px;">Accepted as requested</div>
<div class="t" style="left:934.00px;top:417px;font-size:13px;color:#8c8c8c;letter-spacing:-0.006px;">Ak.2-2511 mm</div>
<div class="t" style="left:1068.70px;top:417px;font-size:13px;color:#8c8c8c;">7</div>
<div class="r" style="left:0px;top:458px;width:1179px;height:1px;background:#373737;"></div>
<div class="r" style="left:0px;top:459px;width:1179px;height:50px;background:#222222;"></div>
<svg class="ic" style="left:34px;top:473.8px;" width="25.5" height="20" viewBox="0 0 25.5 20"><path d="M0.5 4.5 L7 0.5 L24.8 1.2 V15.3 L18.5 19.3 L0.5 18.5 Z" fill="#8a0000"/><path d="M0.5 4.5 L7 0.5 L24.8 1.2 L18.5 6 H7 Z" fill="#a40000"/><path d="M0.5 4.5 L7 6 V14.2 L0.5 18.5 Z" fill="#5a0000"/><path d="M0.5 18.5 L7 14.2 H18.5 V19.3 Z" fill="#a60000"/><path d="M7 6 H18.5 V14.2 H7 Z" fill="#262626"/><path d="M7.5 13.8 L16.5 6.6" stroke="#3c3c3c" stroke-width="0.5"/><path d="M18.5 6 L24.8 1.2 V15.3 L18.5 19.3 Z" fill="#870000"/></svg>
<svg class="ic" style="left:58px;top:487.4px;" width="7" height="9.2" viewBox="2 2 18 20" preserveAspectRatio="none"><path d="M2,5.27L3.28,4L20,20.72L18.73,22L12.8,16.07V22H11.2V16H6V14L8,12V11.27L2,5.27M16,12L18,14V16H17.82L8,6.18V4H7V2H17V4H16V12Z" fill="#b4b4b4" fill-rule="evenodd"/></svg>
<svg class="ic" style="left:83.3px;top:476.4px;" width="22" height="18" viewBox="0 0 22 18"><path d="M1.8 8.9 L7 14.6 L20.3 1.7" fill="none" stroke="#5c9a6a" stroke-width="4.3" stroke-linejoin="miter"/></svg>
<div class="t" style="left:124.00px;top:463px;font-size:10px;color:#cfcfcf;letter-spacing:-0.090px;">wxh=600x235</div>
<div class="t" style="left:124.00px;top:475px;font-size:10px;color:#cfcfcf;letter-spacing:0.183px;">d=460</div>
<div class="t" style="left:124.00px;top:487px;font-size:10px;color:#cfcfcf;">E</div>
<div class="t" style="left:934.00px;top:468px;font-size:13px;color:#8c8c8c;letter-spacing:-0.006px;">Ak.2-2511 mm</div>
<div class="t" style="left:1068.70px;top:468px;font-size:13px;color:#8c8c8c;">8</div>
<div class="t" style="left:368.00px;top:468px;font-size:13px;color:#8c8c8c;">E</div>
<div class="t" style="left:480.00px;top:468px;font-size:13px;color:#8c8c8c;letter-spacing:-0.282px;">Rectangle</div>
<div class="t" style="left:799.00px;top:468px;font-size:13px;color:#8c8c8c;letter-spacing:-0.174px;">Ak.C-2968 mm</div>
<div class="r" style="left:0px;top:509px;width:1179px;height:1px;background:#373737;"></div>
<div class="r" style="left:0px;top:510px;width:1179px;height:50px;background:#222222;"></div>
<svg class="ic" style="left:34px;top:523px;" width="25" height="23.5" viewBox="0 0 25 23.5"><defs><linearGradient id="ca4" gradientUnits="userSpaceOnUse" x1="6" y1="-9" x2="10" y2="9"><stop offset="0" stop-color="#ad0000"/><stop offset="1" stop-color="#6a0000"/></linearGradient><linearGradient id="cb4" gradientUnits="userSpaceOnUse" x1="0" y1="-8" x2="2" y2="9"><stop offset="0" stop-color="#560000"/><stop offset="0.55" stop-color="#6c0000"/><stop offset="1" stop-color="#a80000"/></linearGradient></defs><g transform="translate(7.5 15.3) rotate(-35)"><path d="M0 -8.6 H12.4 A6.2 8.6 0 0 1 12.4 8.6 H0 A6.2 8.6 0 0 1 0 -8.6 Z" fill="url(#ca4)"/><ellipse cx="0" cy="0" rx="6.2" ry="8.6" fill="url(#cb4)" stroke="#a03030" stroke-width="0.3"/><ellipse cx="6.3" cy="0.1" rx="3.7" ry="6.1" fill="#222222"/></g></svg>
<svg class="ic" style="left:58px;top:538.4px;" width="7" height="9.2" viewBox="2 2 18 20" preserveAspectRatio="none"><path d="M2,5.27L3.28,4L20,20.72L18.73,22L12.8,16.07V22H11.2V16H6V14L8,12V11.27L2,5.27M16,12L18,14V16H17.82L8,6.18V4H7V2H17V4H16V12Z" fill="#b4b4b4" fill-rule="evenodd"/></svg>
<svg class="ic" style="left:83.3px;top:527.4px;" width="22" height="18" viewBox="0 0 22 18"><path d="M1.8 8.9 L7 14.6 L20.3 1.7" fill="none" stroke="#5c9a6a" stroke-width="4.3" stroke-linejoin="miter"/></svg>
<div class="t" style="left:124.00px;top:514px;font-size:10px;color:#cfcfcf;letter-spacing:0.073px;">ø=260</div>
<div class="t" style="left:934.00px;top:519px;font-size:13px;color:#8c8c8c;letter-spacing:-0.086px;">Ak.3-3609 mm</div>
<div class="t" style="left:1068.70px;top:519px;font-size:13px;color:#8c8c8c;">17</div>
<div class="t" style="left:368.00px;top:519px;font-size:13px;color:#8c8c8c;">V</div>
<div class="t" style="left:480.00px;top:519px;font-size:13px;color:#8c8c8c;letter-spacing:-0.262px;">Round</div>
<div class="t" style="left:799.00px;top:519px;font-size:13px;color:#8c8c8c;letter-spacing:-0.114px;">Ak.B-6208 mm</div>
<div class="r" style="left:0px;top:560px;width:1179px;height:1px;background:#373737;"></div>
<div class="r" style="left:13.2px;top:317px;width:6px;height:9px;background:#222"></div>
<svg class="ic" style="left:9.5px;top:314.4px;" width="13.8" height="13.6" viewBox="1 1.54 22 20.93" preserveAspectRatio="none"><path d="M23,12L20.56,9.22L20.9,5.54L17.29,4.72L15.4,1.54L12,3L8.6,1.54L6.71,4.72L3.1,5.53L3.44,9.21L1,12L3.44,14.78L3.1,18.47L6.71,19.29L8.6,22.47L12,21L15.4,22.46L17.29,19.28L20.9,18.46L20.56,14.78L23,12M13,17H11V15H13V17M13,13H11V7H13V13Z" fill="#c58a3e" fill-rule="evenodd"/></svg>
</div>
<!-- scrollbars -->
<div class="r" style="left:1181px;top:212px;width:17px;height:527px;background:#222222;"></div>
<div class="r" style="left:1181px;top:212px;width:17px;height:16px;background:#3a3a3a;"></div>
<div class="r" style="left:1181px;top:229px;width:17px;height:438px;background:#444444;"></div>
<div class="r" style="left:1181px;top:722px;width:17px;height:17px;background:#3a3a3a;"></div>
<svg class="ic" style="left:1185.6px;top:216.6px;" width="8" height="8" viewBox="4.08 4.16 15.84 15.84" preserveAspectRatio="none"><path d="M13,20H11V8L5.5,13.5L4.08,12.08L12,4.16L19.92,12.08L18.5,13.5L13,8V20Z" fill="#5a5a5a" fill-rule="evenodd"/></svg>
<svg class="ic" style="left:1185.6px;top:726.4px;" width="8" height="8" viewBox="4.08 4 15.84 15.84" preserveAspectRatio="none"><path d="M11,4H13V16L18.5,10.5L19.92,11.92L12,19.84L4.08,11.92L5.5,10.5L11,16V4Z" fill="#5a5a5a" fill-rule="evenodd"/></svg>
<div class="r" style="left:2px;top:739px;width:1196px;height:59px;background:#222222;"></div>
<div class="r" style="left:192px;top:739px;width:17px;height:17px;background:#363636;"></div>
<div class="r" style="left:209px;top:739px;width:806px;height:17px;background:#444444;"></div>
<div class="r" style="left:1164px;top:739px;width:17px;height:17px;background:#363636;"></div>
<svg class="ic" style="left:196.5px;top:743.5px;" width="8" height="8" viewBox="4.16 4.08 15.84 15.84" preserveAspectRatio="none"><path d="M20,11V13H8L13.5,18.5L12.08,19.92L4.16,12L12.08,4.08L13.5,5.5L8,11H20Z" fill="#5a5a5a" fill-rule="evenodd"/></svg>
<svg class="ic" style="left:1168.5px;top:743.5px;" width="8" height="8" viewBox="4 4.08 15.84 15.84" preserveAspectRatio="none"><path d="M4,11V13H16L10.5,18.5L11.92,19.92L19.84,12L11.92,4.08L10.5,5.5L16,11H4Z" fill="#5a5a5a" fill-rule="evenodd"/></svg>
<!-- bottom bar -->
<svg class="ic" style="left:26px;top:771.6px;" width="11" height="11" viewBox="4.16 4.08 15.84 15.84" preserveAspectRatio="none"><path d="M20,11V13H8L13.5,18.5L12.08,19.92L4.16,12L12.08,4.08L13.5,5.5L8,11H20Z" fill="#b83a16" fill-rule="evenodd"/></svg>
<div class="t" style="left:39.50px;top:770px;font-size:13.5px;color:#b83a16;font-weight:bold;letter-spacing:-0.141px;">Back to start page</div>
<div class="r" style="left:723px;top:761px;width:150px;height:32px;border-radius:2.5px;background:#57291e"></div>
<svg class="ic" style="left:762.9px;top:770.4px;" width="10.9" height="13.4" viewBox="4 1 16 22" preserveAspectRatio="none"><path d="M12,18A6,6 0 0,1 6,12C6,11 6.25,10.03 6.7,9.2L5.24,7.74C4.46,8.97 4,10.43 4,12A8,8 0 0,0 12,20V23L16,19L12,15M12,4V1L8,5L12,9V6A6,6 0 0,1 18,12C18,13 17.75,13.97 17.3,14.8L18.76,16.26C19.54,15.03 20,13.57 20,12A8,8 0 0,0 12,4Z" fill="#1d1d1d" fill-rule="evenodd"/></svg>
<div class="t" style="left:777.90px;top:769px;font-size:14px;color:#1d1d1d;letter-spacing:-0.094px;">Fix All (0)</div>
<div class="r" style="left:883px;top:761px;width:149.5px;height:32px;border-radius:2.5px;background:#57291e"></div>
<svg class="ic" style="left:904.2px;top:770.4px;" width="10.9" height="13.4" viewBox="4 1 16 22" preserveAspectRatio="none"><path d="M12,18A6,6 0 0,1 6,12C6,11 6.25,10.03 6.7,9.2L5.24,7.74C4.46,8.97 4,10.43 4,12A8,8 0 0,0 12,20V23L16,19L12,15M12,4V1L8,5L12,9V6A6,6 0 0,1 18,12C18,13 17.75,13.97 17.3,14.8L18.76,16.26C19.54,15.03 20,13.57 20,12A8,8 0 0,0 12,4Z" fill="#1d1d1d" fill-rule="evenodd"/></svg>
<div class="t" style="left:919.00px;top:769px;font-size:14px;color:#1d1d1d;letter-spacing:-0.252px;">Fix Selected (0)</div>
<svg class="ic" style="left:1088.8px;top:771.2px;" width="11.2" height="11.3" viewBox="4 4 16 16" preserveAspectRatio="none"><path d="M17.65,6.35C16.2,4.9 14.21,4 12,4A8,8 0 0,0 4,12A8,8 0 0,0 12,20C15.73,20 18.84,17.45 19.73,14H17.65C16.83,16.33 14.61,18 12,18A6,6 0 0,1 6,12A6,6 0 0,1 12,6C13.66,6 15.14,6.69 16.22,7.78L13,11H20V4L17.65,6.35Z" fill="#b83a16" fill-rule="evenodd"/></svg>
<div class="t" style="left:1103.00px;top:770px;font-size:13.5px;color:#b83a16;font-weight:bold;letter-spacing:-0.553px;">Refresh</div>
<!-- dialog -->
<div class="r" style="left:310px;top:174px;width:580px;height:491px;border-radius:5px;background:#323232;box-shadow:0 8px 30px 4px rgba(0,0,0,.5),0 0 8px rgba(0,0,0,.3)"></div>
<div class="t" style="left:551.00px;top:183px;font-size:20px;color:#f4f4f4;font-weight:bold;letter-spacing:-0.756px;">Add Status</div>
<div class="r" style="left:327.6px;top:234.6px;width:40.6px;height:40.4px;background:#008000;border:1.2px solid #f2f2f2"></div>
<div class="t" style="left:383.60px;top:246px;font-size:18.5px;color:#e8e8e8;">1</div>
<div class="t" style="left:418.00px;top:233px;font-size:16px;color:#ececec;letter-spacing:-0.175px;">Accepted as requested</div>
<div class="t" style="left:420.50px;top:258px;font-size:12px;color:#ececec;letter-spacing:-0.115px;">The void is accepted by receiver as requested by sender</div>
<div class="r" style="left:327.6px;top:295.8px;width:40.6px;height:40.4px;background:#0000ff;border:1.2px solid #f2f2f2"></div>
<div class="t" style="left:383.30px;top:307px;font-size:18.5px;color:#e8e8e8;">2</div>
<div class="t" style="left:418.00px;top:295px;font-size:16px;color:#ececec;letter-spacing:-0.012px;">Accepted but changed</div>
<div class="t" style="left:420.50px;top:320px;font-size:12px;color:#ececec;letter-spacing:-0.008px;">The void is accepted by receiver, if its moved to position communicated by receiver</div>
<div class="r" style="left:327.6px;top:357.6px;width:40.6px;height:40.4px;background:#ffff00;border:1.2px solid #f2f2f2"></div>
<div class="t" style="left:383.30px;top:369px;font-size:18.5px;color:#e8e8e8;">3</div>
<div class="t" style="left:418.00px;top:356px;font-size:16px;color:#ececec;letter-spacing:0.018px;">Not accepted</div>
<div class="t" style="left:420.50px;top:381px;font-size:12px;color:#ececec;letter-spacing:-0.042px;">The void is not accepted by receiver but the hole is created</div>
<div class="r" style="left:327.6px;top:419.6px;width:40.6px;height:40.4px;background:#ff0000;border:1.2px solid #f2f2f2"></div>
<div class="t" style="left:382.80px;top:431px;font-size:18.5px;color:#e8e8e8;">4</div>
<div class="t" style="left:418.00px;top:418px;font-size:16px;color:#ececec;letter-spacing:-0.394px;">Rejected</div>
<div class="t" style="left:420.50px;top:443px;font-size:12px;color:#ececec;letter-spacing:-0.019px;">The void is not accepted by receiver and don't get any holes</div>
<div class="r" style="left:320px;top:470px;width:560px;height:61.5px;background:#444444;"></div>
<div class="r" style="left:327.6px;top:481px;width:40.6px;height:40.4px;background:#ff00e1;border:1.2px solid #f2f2f2"></div>
<div class="t" style="left:383.50px;top:492px;font-size:18.5px;color:#e8e8e8;">5</div>
<div class="t" style="left:418.00px;top:480px;font-size:16px;color:#ececec;letter-spacing:-0.615px;">Revised</div>
<div class="t" style="left:420.50px;top:504px;font-size:12px;color:#ececec;letter-spacing:-0.025px;">The void is modified by sender</div>
<div class="r" style="left:320px;top:552.5px;width:560px;height:50.5px;border:2px solid #f05023;border-radius:5px"></div>
<div class="r" style="left:333.5px;top:551px;width:56px;height:4px;background:#323232;"></div>
<div class="t" style="left:337.50px;top:548px;font-size:10.5px;color:#f05023;letter-spacing:-0.283px;">Comments</div>
<div class="t" style="left:338.50px;top:571px;font-size:13.5px;color:#f6f6f6;letter-spacing:0.062px;">Please move 500 mm down</div>
<div class="r" style="left:507.2px;top:569.5px;width:1px;height:16px;background:#f05023;"></div>
<div class="r" style="left:489px;top:622px;width:100px;height:32px;border-radius:2.5px;background:#f05023;box-shadow:0 2px 4px rgba(0,0,0,.45)"></div>
<div class="t" style="left:531.00px;top:631px;font-size:14px;color:#141414;font-weight:bold;letter-spacing:-1.500px;">OK</div>
<div class="t" style="left:639.00px;top:631px;font-size:14px;color:#f05023;font-weight:bold;letter-spacing:-0.652px;">Cancel</div>
</div>
</body>
</html>
